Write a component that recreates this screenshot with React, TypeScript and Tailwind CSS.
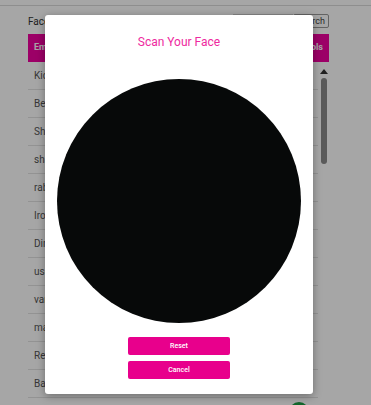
import React from "react";

// Rows behind the scan dialog (mostly hidden by it)
const users = [
  "Kickass",
  "Bellamy",
  "Shane",
  "shaun",
  "rabbit",
  "Ironman",
  "Dinesh",
  "user12",
  "varun",
  "manoj",
  "Retro",
  "Balaji",
  "",
];

export default function App() {
  return (
    <div className="relative h-[405px] w-[371px] overflow-hidden bg-white font-['Roboto',sans-serif]">
      {/* Page behind the dialog */}
      <div className="h-[6px] border-b border-[#dadada]" />
      <div className="px-[28px] pr-[42px]">
        <div className="mt-[8px] flex h-[14px] items-center justify-between">
          <span className="text-[10px] text-[#333]">Face</span>
          <div className="flex h-[14px] items-center">
            <div className="h-[14px] w-[60px] border border-[#ccc]" />
            <button className="h-[14px] rounded-[2px] border border-[#999] px-[3px] text-[9px] leading-none text-[#444]">
              Search
            </button>
          </div>
        </div>
        <div className="mt-[6px] flex h-[28px] items-center justify-between bg-[#f0009f] px-[6px] text-[9px] font-bold text-white">
          <span>Email</span>
          <span>Tools</span>
        </div>
        <div className="flex">
          <div className="flex-1">
            {users.map((u, i) => (
              <div key={i} className="flex h-[28px] items-center justify-between border-b border-[#e2e2e2] pl-[6px] pr-[9px] text-[10px] text-[#555]">
                <span>{u}</span>
                <span className="h-[20px] w-[20px] rounded-full bg-[#1f9e45]" />
              </div>
            ))}
          </div>
          <div className="flex w-[11px] flex-col items-center pt-[7px]">
            <div className="h-0 w-0 border-x-[4px] border-b-[5px] border-x-transparent border-b-[#333]" />
            <div className="mt-[4px] h-[86px] w-[6px] rounded-full bg-[#8a8a8a]" />
          </div>
        </div>
      </div>

      {/* Overlay + dialog */}
      <div className="absolute inset-0 bg-black/35 pl-[45px] pt-[15px]">
        <div className="flex h-[379px] w-[268px] flex-col items-center rounded-[3px] bg-white shadow-[0_2px_8px_rgba(0,0,0,0.35)]">
          <h2 className="mt-[20px] text-[12px] leading-[15px] text-[#ee2aa0]">Scan Your Face</h2>
          <div className="mt-[29px] h-[244px] w-[244px] rounded-full bg-[#070909]" />
          <div className="mt-[14px] flex flex-col gap-[6px]">
            <button className="h-[18px] w-[102px] rounded-[2px] bg-[#e8008c] text-[7px] font-medium text-white">Reset</button>
            <button className="h-[18px] w-[102px] rounded-[2px] bg-[#e8008c] text-[7px] font-medium text-white">Cancel</button>
          </div>
        </div>
      </div>
    </div>
  );
}
